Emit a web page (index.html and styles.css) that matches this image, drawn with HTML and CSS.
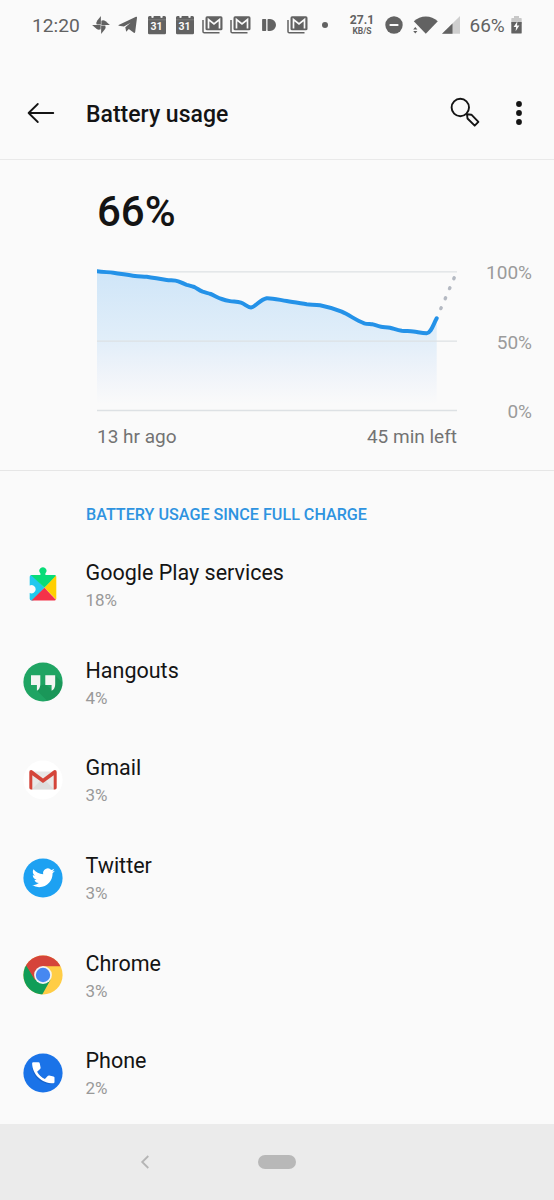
FILE: index.html
```html
<!DOCTYPE html>
<html lang="en">
<head>
<meta charset="utf-8">
<title>Battery usage</title>
<link rel="stylesheet" href="styles.css">
</head>
<body>
<svg width="0" height="0" class="defs">
  <defs>
    <symbol id="cal" viewBox="0 0 18 20">
      <path fill="#626262" d="M1.500 1h2v1.600h2V1h7v1.600h2V1h2Q18 1 18 2.500v15.500q0 1.200-1.200 1.200H1.200Q0 19.200 0 18V2.500Q0 1 1.500 1z" />
      <path stroke="#8d8d8d" stroke-width=".6" d="M0 4.800h18"/>
      <path stroke="#fafafa" stroke-width="1.500" d="M4.500 1v1.800M13.500 1v1.800"/>
    </symbol>
    <symbol id="mails" viewBox="0 0 21 18">
      <path fill="none" stroke="#626262" stroke-width="1.500" d="M1 4v11.500q0 1.300 1.300 1.300H17.500"/>
      <rect x="3.500" y=".3" width="17" height="14" rx="1.600" fill="#626262"/>
      <path fill="none" stroke="#fafafa" stroke-width="1.700" d="M6.500 12.500V3.500l5.500 4.300 5.500-4.300v9"/>
    </symbol>
  </defs>
</svg>
<div class="screen">
  <header class="status">
    <span class="clock">12:20</span>
    <svg class="pin" width="18" height="18" viewBox="0 0 18 18"><g fill="#626262"><path id="blade" d="M8.900.1v8.500H4.700q-.9-2.200.6-4.200z"/><use href="#blade" transform="rotate(90 9 9)"/><use href="#blade" transform="rotate(180 9 9)"/><use href="#blade" transform="rotate(270 9 9)"/></g></svg>
    <svg class="plane" width="20" height="18" viewBox="0 0 20 18"><path fill="#626262" d="M.6 9 18 .8q1.300-.4 1 1L17.200 16q-.5 1.400-1.700.6l-4.700-3.600-2.600 2.800-.9-4.500 5.300-4.600-6.700 3.700L.8 9.700q-.8-.3-.2-.7z"/></svg>
    <span class="calendar c1"><svg width="18" height="20"><use href="#cal"/></svg><b>31</b></span>
    <span class="calendar"><svg width="18" height="20"><use href="#cal"/></svg><b>31</b></span>
    <svg class="m1" width="21" height="18"><use href="#mails"/></svg>
    <svg class="m2" width="21" height="18"><use href="#mails"/></svg>
    <svg class="push" width="14" height="12" viewBox="0 0 14 12"><path fill="#626262" d="M.8 0h2.700q.7 0 .7.700v10.600q0 .7-.7.700H.8q-.7 0-.7-.7V.7Q.1 0 .8 0zM5.500.8Q5.500 0 6.200 0H8a6 6 0 0 1 0 12H6.200q-.7 0-.7-.8z"/></svg>
    <svg class="m3" width="21" height="18"><use href="#mails"/></svg>
    <i class="dot"></i>
    <span class="speed"><b>27.1</b><small>KB/S</small></span>
    <svg class="dnd" width="18" height="18" viewBox="0 0 18 18"><circle cx="9" cy="9" r="8.700" fill="#626262"/><path stroke="#fafafa" stroke-width="1.800" stroke-linecap="round" d="M5.300 9h7.400"/></svg>
    <svg class="wifi" width="25" height="18" viewBox="0 0 25 18"><path fill="#626262" d="M.8 5.200q5.200-4.700 12-4.700t12 4.700L12.800 17.800z"/><path fill="#626262" stroke="#fafafa" stroke-width=".9" paint-order="stroke" d="M.2 13.600 2.300 11l2.100 2.600zM.2 15l2.100 2.600L4.400 15z"/></svg>
    <svg class="cell" width="18" height="18" viewBox="0 0 18 18"><path fill="#cfcfcf" d="M18 0v17.700H0z"/><path fill="#626262" d="M10.500 7.400v10.300H0z"/></svg>
    <span class="pct">66%</span>
    <svg class="batt" width="11" height="18" viewBox="0 0 11 18"><path fill="#c8c8c8" d="M3 0h5v2h2q.7 0 .7.700V8H.3V2.700Q.3 2 1 2h2z"/><path fill="#626262" d="M.3 6h10.400v10.700q0 .9-.9.900H1.200q-.9 0-.9-.9z"/><path fill="#fafafa" d="M6.400 5.300 2.600 11h2.500l-.5 4.300L8.400 9.600H6z"/></svg>
  </header>

  <div class="toolbar">
    <svg class="back" width="28" height="22" viewBox="27 101.500 28 22"><path fill="none" stroke="#141414" stroke-width="1.800" stroke-linecap="round" stroke-linejoin="round" d="M37.800 103.500 28.600 112.500l9.200 9M28.600 112.500H53.300"/></svg>
    <h1>Battery usage</h1>
    <svg class="search" width="32" height="32" viewBox="450 97 32 32"><g fill="none" stroke="#141414" stroke-width="1.900"><circle cx="460.300" cy="107.500" r="8.700"/><path stroke-linejoin="round" d="M467 114.300l.5 4.200 7.200 7.200 3.700-3.800-7-7.200z"/></g></svg>
    <svg class="more" width="8" height="26" viewBox="0 0 8 26"><g fill="#141414"><circle cx="4" cy="4" r="2.900"/><circle cx="4" cy="13" r="2.900"/><circle cx="4" cy="22" r="2.900"/></g></svg>
  </div>

  <section class="summary">
    <div class="level">66%</div>
    <div class="chart">
      <div class="plot">
        <svg width="362" height="146" viewBox="97 267 362 146">
          <defs><linearGradient id="fade" x1="0" y1="271" x2="0" y2="404" gradientUnits="userSpaceOnUse"><stop offset="0" stop-color="#2493f0" stop-opacity=".2"/><stop offset=".5" stop-color="#2493f0" stop-opacity=".12"/><stop offset="1" stop-color="#4078f0" stop-opacity="0"/></linearGradient></defs>
          <path fill="url(#fade)" d="M97 271.300 L113 272.700 135 276 147 276.700 167 280 178 281.300 187 284.700 194.500 287 203 291.700 211 294 222 299 230 301 241 302.700 251 307.700 266.700 298.300 287 301 307 304.300 320 305.300 342 311.700 364 323 381 326.700 402 330.700 427 333.300 436.700 318.300V410H97z"/>
          <path stroke="#dde1e4" stroke-width="1.300" d="M97 271.800H457M97 341.200H457M97 410.500H457"/>
          <path fill="none" stroke="#2492e8" stroke-width="4" stroke-linecap="round" stroke-linejoin="round" d="M97 271.300C103 272 109 272.200 113.300 272.700C121 273.700 128 275.200 135 276C139 276.500 143 276.300 146.700 276.700C154 277.700 160 279.200 166.700 280C171 280.500 175 280.300 178.300 281.300C181.500 282.300 183.500 283.800 186.700 284.900C189.500 285.700 191.500 286 194.300 287C197.500 288.600 199 290.200 202.700 291.700C205.500 292.700 208 293 210.700 294C214.500 295.500 217.500 297.700 221.700 299C225 300.200 227 300.600 230 301.100C234 301.700 237.500 301.700 241 302.700C245 304 247.500 307.500 251 307.500C255.500 307 260 299.500 266.700 298.200C273 298 280 300 286.700 301C293.500 302.200 300 303.200 306.700 304.300C311 304.800 315.500 304.500 320 305.300C328 306.900 335 309 341.700 311.700C350 315.300 356 320.300 364.300 323.300C367 324.100 370 323.900 372.700 324.300C375.500 325.100 378 326.200 381 326.700C384 327.200 387 327.100 390 327.700C394 328.700 397.500 330 401.700 330.700C405.500 331.200 409.500 330.900 413.300 331.400C418 332 422 333.200 426.700 333.200C431 333 433 325 436.700 318.300"/>
          <path fill="none" stroke="#b4b9c2" stroke-width="3.400" stroke-linecap="round" d="m440.800 308.600.4-.9M445.200 298.700l.4-.9M449.500 288.600l.4-.9M453.800 278.700l.4-.9"/>
        </svg>
        <div class="range"><span>13 hr ago</span><span>45 min left</span></div>
      </div>
      <div class="scale"><span>100%</span><span>50%</span><span>0%</span></div>
    </div>
  </section>

  <main class="apps">
    <h2>BATTERY USAGE SINCE FULL CHARGE</h2>
    <div class="app">
      <svg width="40" height="40" viewBox="0 0 40 40"><defs><clipPath id="pz"><path d="M8.400 10h9V8.300a3.500 3.500 0 1 1 5 0V10h9.200q1.700 0 1.700 1.700v22q0 1.700-1.700 1.700H8.400q-1.700 0-1.700-1.700v-5.600a4.200 4.200 0 1 0 0-7.600v-8.800Q6.700 10 8.400 10z"/></clipPath></defs><g clip-path="url(#pz)"><path fill="#20c8ee" d="M6 9h2l13.500 13.800L10 36H6z"/><path fill="#08dc78" d="M7.400 0H34v10.500L21.500 22.800 7.800 10z"/><path fill="#ffcf00" d="M34 9.500v26L21.500 22.800z"/><path fill="#f43249" d="M8 36h26L21.500 22.800z"/></g></svg>
      <div><p>Google Play services</p><small>18%</small></div>
    </div>
    <div class="app">
      <svg width="40" height="40" viewBox="0 0 40 40"><defs><clipPath id="hc"><circle cx="20" cy="20" r="19.600"/></clipPath></defs><circle cx="20" cy="20" r="19.600" fill="#1fa463"/><path clip-path="url(#hc)" fill="#16894f" d="m14 28.500 3-5 5.500-1L29 28l3.200-14.500 8 8V40H25.500z" opacity=".5"/><path fill="#f3f5f3" d="M8 13.300h9.300v8.900q0 4.800-3.400 6.500v-5.600H8zM22.300 13.300h9.900v8.900q0 4.800-3.600 6.500v-5.600h-6.300z"/></svg>
      <div><p>Hangouts</p><small>4%</small></div>
    </div>
    <div class="app">
      <svg width="40" height="40" viewBox="0 0 40 40"><circle cx="20" cy="20" r="19.600" fill="#fff"/><path fill="#e8e8e8" d="M8 11.500h24v18H8z"/><path fill="#d5d5d5" d="M9 29.500 18 20l2 1.500 2-1.500 9 9.500z" opacity=".6"/><path fill="#d4453a" d="M6.300 12q0-1.900 1.800-1.900.9 0 1.600.6L20 18.500l10.300-7.800q.7-.6 1.600-.6 1.800 0 1.800 1.900v15.800q0 1.700-1.700 1.700h-1.300V15.200L20 23 9.300 15.200v14.300H8q-1.700 0-1.700-1.700z"/></svg>
      <div><p>Gmail</p><small>3%</small></div>
    </div>
    <div class="app">
      <svg width="40" height="40" viewBox="0 0 40 40"><circle cx="20" cy="20" r="19.600" fill="#1da1f2"/><path fill="#fff" transform="translate(8.900 8.300) scale(.96)" d="M23.950 4.570a10 10 0 0 1-2.820.77 4.960 4.960 0 0 0 2.160-2.720c-.95.550-2 .96-3.130 1.180a4.920 4.920 0 0 0-8.380 4.480C7.690 8.090 4.070 6.130 1.640 3.160a4.820 4.820 0 0 0-.67 2.480c0 1.710.87 3.210 2.190 4.100a4.900 4.900 0 0 1-2.230-.62v.06a4.920 4.920 0 0 0 3.950 4.830 5 5 0 0 1-2.210.08 4.940 4.940 0 0 0 4.600 3.420A9.870 9.870 0 0 1 0 19.540a13.990 13.990 0 0 0 7.550 2.210c9.050 0 14-7.500 14-13.980 0-.21 0-.42-.02-.63a9.940 9.940 0 0 0 2.420-2.570z"/></svg>
      <div><p>Twitter</p><small>3%</small></div>
    </div>
    <div class="app">
      <svg width="40" height="40" viewBox="0 0 40 40"><defs><clipPath id="cc"><circle cx="20" cy="20" r="19.600"/></clipPath></defs><g clip-path="url(#cc)"><path fill="#ffcd46" d="M0 0h40v40H0z"/><path fill="#109d58" d="M0 0 3 9.300 12.300 24.500 27.500 24.700 19 40H0z"/><path fill="#d5443a" d="M0 0h40v11.200H20L12 25 3 10.200z"/></g><circle cx="20" cy="20" r="8.900" fill="#f4f4f4"/><circle cx="20" cy="20" r="7.200" fill="#4688f1"/></svg>
      <div><p>Chrome</p><small>3%</small></div>
    </div>
    <div class="app">
      <svg width="40" height="40" viewBox="0 0 40 40"><circle cx="20" cy="20" r="19.600" fill="#1a73e8"/><path fill="#0f55b8" opacity=".55" d="M9.200 14.500c1 9 7.500 15.500 17.500 16.700l5-1.200-9-3-9.500-8z"/><path fill="#fff" d="M10.300 9.200h5.200q1 0 1.200 1l.9 4.300q.2.900-.5 1.500l-3 2.700q2.800 5 7.800 7.300l2.800-3q.6-.7 1.500-.5l4.300.9q1 .2 1 1.200v4.400q0 1.200-1.200 1.200C18.500 30.200 9.600 21.500 9.100 10.400q0-1.200 1.200-1.200z"/></svg>
      <div><p>Phone</p><small>2%</small></div>
    </div>
  </main>

  <nav class="navbar">
    <svg width="10" height="14" viewBox="0 0 10 14"><path fill="none" stroke="#b5b5b5" stroke-width="1.800" d="M8.300 1 2.200 7l6.100 6"/></svg>
    <i></i>
  </nav>
</div>
</body>
</html>
```
FILE: styles.css
```css
* { box-sizing: border-box; }
body { margin: 0; background: #fafafa; font-family: Roboto, sans-serif; color: #141414; }
.defs { display: block; }
.screen { width: 554px; height: 1200px; display: flex; flex-direction: column; overflow: hidden; }
svg { display: block; flex: none; }
p, h1, h2 { margin: 0; font-weight: 400; }
span, p, h1, h2, small { white-space: nowrap; }

.status { height: 50px; flex: none; display: flex; align-items: center; padding-left: 32px; color: #626262; }
.clock { width: 60px; font-size: 19.200px; line-height: 24px; padding-top: 2px; }
.plane { margin-left: 8px; }
.calendar { display: grid; width: 18px; height: 20px; margin-left: 10px; }
.c1 { margin-left: 9.500px; }
.calendar > * { grid-area: 1 / 1; }
.calendar b { color: #fafafa; font-size: 10.500px; line-height: 13px; padding-top: 5px; text-align: center; font-weight: 700; }
.m1 { margin-left: 8.500px; }
.m2 { margin-left: 7px; }
.push { margin-left: 11px; }
.m3 { margin-left: 10.500px; }
.dot { flex: none; width: 6px; height: 6px; border-radius: 50%; background: #626262; margin-left: 14.500px; }
.speed { display: flex; flex-direction: column; align-items: center; gap: 1px; width: 26px; margin-left: 21px; }
.speed b { font-size: 12.200px; line-height: 12px; }
.speed small { font-size: 8.500px; line-height: 9px; font-weight: 700; }
.dnd { margin-left: 10px; }
.wifi { margin-left: 9.500px; }
.cell { margin-left: 4px; }
.pct { width: 42px; margin-left: 10px; font-size: 19px; line-height: 24px; padding-top: 2px; }
.batt { margin-left: -1px; }

.toolbar { height: 110px; flex: none; display: flex; align-items: center; padding: 16px 31px 0 27px; border-bottom: 1.500px solid #e9e9e9; }
.toolbar h1 { font-size: 23px; line-height: 28px; font-weight: 500; margin-left: 31px; padding-top: 4px; flex: 1; }
.more { margin-left: 33px; }

.summary { height: 311px; flex: none; padding: 27px 22px 0 97px; border-bottom: 1px solid #e6e6e6; }
.level { font-size: 42px; line-height: 50px; font-weight: 500; }
.chart { display: flex; justify-content: space-between; padding-top: 30px; }
.range { display: flex; justify-content: space-between; width: 360px; padding-top: 12px; font-size: 19px; line-height: 24px; color: #737373; }
.scale { display: flex; flex-direction: column; gap: 45.500px; margin-top: -6px; text-align: right; font-size: 19px; line-height: 24px; color: #9b9b9b; }

.apps { flex: none; height: 653px; }
.apps h2 { font-size: 16.150px; line-height: 20px; font-weight: 500; color: #2e93e0; padding: 34px 0 13px 86px; }
.app { height: 97.700px; display: flex; padding: 20px 0 0 22.500px; }
.app svg { margin-top: 6.500px; }
.app > div { padding-left: 23px; }
.app p { font-size: 21.500px; line-height: 29px; }
.app small { display: block; font-size: 17px; line-height: 26px; color: #999; }

.navbar { height: 76px; flex: none; background: #ebebeb; display: flex; align-items: center; padding-left: 140px; }
.navbar i { width: 38px; height: 14px; border-radius: 7px; background: #b8b8b8; margin-left: 108px; }
```
